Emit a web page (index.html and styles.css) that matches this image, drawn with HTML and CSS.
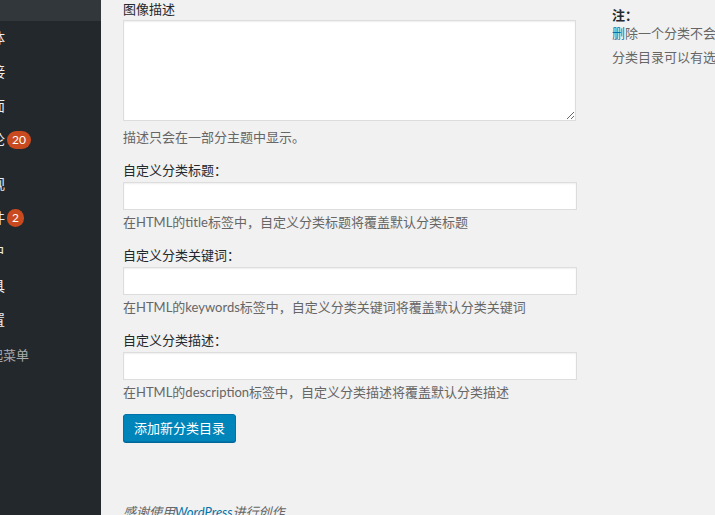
FILE: index.html
```html
<!DOCTYPE html>
<html lang="zh-CN">
  <head>
    <meta charset="UTF-8" />
    <meta name="viewport" content="width=device-width, initial-scale=1.0" />
    <title>分类目录</title>
    <link rel="stylesheet" href="styles.css">
  </head>
  <body>
    <div class="admin-menu">
      <div class="submenu-tail"></div>
      <ul class="menu">
        <li><span class="menu-name">媒体</span></li>
        <li><span class="menu-name">链接</span></li>
        <li><span class="menu-name">页面</span></li>
        <li><span class="menu-name">评论</span><span class="badge">20</span></li>
        <li class="separator"></li>
        <li><span class="menu-name">外观</span></li>
        <li><span class="menu-name">插件</span><span class="badge round">2</span></li>
        <li><span class="menu-name">用户</span></li>
        <li><span class="menu-name">工具</span></li>
        <li><span class="menu-name">设置</span></li>
        <li class="collapse"><span class="menu-name">收起菜单</span></li>
      </ul>
    </div>

    <div class="content">
      <div class="columns">
        <form class="col-left">
          <div class="form-field">
            <label for="tag-description">图像描述</label>
            <textarea id="tag-description" name="description"></textarea>
            <p class="help first">描述只会在一部分主题中显示。</p>
          </div>
          <div class="form-field">
            <label for="cat-title">自定义分类标题：</label>
            <input id="cat-title" type="text" name="cat_title" />
            <p class="help">在HTML的title标签中，自定义分类标题将覆盖默认分类标题</p>
          </div>
          <div class="form-field">
            <label for="cat-keywords">自定义分类关键词：</label>
            <input id="cat-keywords" type="text" name="cat_keywords" />
            <p class="help">在HTML的keywords标签中，自定义分类关键词将覆盖默认分类关键词</p>
          </div>
          <div class="form-field">
            <label for="cat-desc">自定义分类描述：</label>
            <input id="cat-desc" type="text" name="cat_desc" />
            <p class="help">在HTML的description标签中，自定义分类描述将覆盖默认分类描述</p>
          </div>
          <button type="submit" class="button-primary">添加新分类目录</button>
        </form>

        <div class="col-right">
          <p class="note-title"><strong>注：</strong></p>
          <p><a href="#">删</a>除一个分类不会删除分类中的文章。然而，仅隶属于被删除分类的文章将被指定为默认分类。</p>
          <p>分类目录可以有选择性地转换为标签，请使用分类目录到标签转换器。</p>
        </div>
      </div>

      <p class="footer">感谢使用<a href="#">WordPress</a>进行创作</p>
    </div>
  </body>
</html>
```

FILE: styles.css
```css
html,
body {
  margin: 0;
  padding: 0;
  height: 515px;
  overflow: hidden;
}

body {
  display: flex;
  background: #f1f1f1;
  color: #23282d;
  font-family: "Lato", "Noto Sans CJK SC", sans-serif;
  font-size: 13px;
  line-height: 18px;
  text-spacing-trim: space-all;
}

a {
  color: #0073aa;
  text-decoration: none;
}

/* admin menu (scrolled off to the left) */
.admin-menu {
  width: 101px;
  flex-shrink: 0;
  background: #23282d;
  overflow: hidden;
}

.submenu-tail {
  height: 21px;
  background: #32373c;
}

.menu {
  list-style: none;
  margin: 0;
  padding: 0;
}

.menu li {
  height: 34px;
  display: flex;
  align-items: center;
  white-space: nowrap;
  color: #eee;
  font-size: 14px;
}

.menu-name {
  margin-left: -23px;
}

.menu li.separator {
  height: 10px;
}

.menu li.collapse {
  height: 36px;
  color: #aaa;
  font-size: 13px;
}

.badge {
  margin-left: 2px;
  height: 18px;
  min-width: 8px;
  padding: 0 5px;
  border-radius: 9px;
  background: #ca4a1f;
  color: #fff;
  font-size: 12px;
  line-height: 18px;
  text-align: center;
}

.badge.round {
  width: 17px;
  min-width: 0;
  padding: 0;
}

/* main content */
.content {
  flex: 1;
  padding-left: 22px;
  min-width: 0;
}

.columns {
  display: flex;
}

.col-left {
  width: 454px;
  flex-shrink: 0;
  margin: 0;
}

.form-field label {
  display: block;
  height: 18px;
}

.form-field textarea {
  display: block;
  box-sizing: border-box;
  width: 453px;
  height: 101px;
  margin: 2px 0 0;
  padding: 2px 6px;
  border: 1px solid #ddd;
  background: #fff;
  box-shadow: inset 0 1px 2px rgba(0, 0, 0, 0.07);
  font-family: inherit;
  font-size: 14px;
  resize: vertical;
}

.form-field input {
  display: block;
  box-sizing: border-box;
  width: 454px;
  height: 28px;
  margin: 3px 0 0;
  padding: 3px 5px;
  border: 1px solid #ddd;
  background: #fff;
  box-shadow: inset 0 1px 2px rgba(0, 0, 0, 0.07);
  font-family: inherit;
  font-size: 14px;
}

.help {
  margin: 3px 0 15px;
  color: #666;
  white-space: nowrap;
}

.help.first {
  margin-top: 7px;
}

.form-field:last-of-type .help {
  margin-bottom: 13px;
}

.button-primary {
  height: 28px;
  padding: 0 10px 1px;
  border: 1px solid #0073aa;
  border-radius: 3px;
  background: #0085ba;
  box-shadow: 0 1px 0 #006799;
  color: #fff;
  font-family: inherit;
  font-size: 13px;
  cursor: pointer;
}

.col-right {
  margin-left: 35px;
  padding-top: 6px;
  white-space: nowrap;
}

.col-right p {
  margin: 0 0 6px;
  color: #666;
}

.col-right .note-title {
  margin: 0;
  color: #23282d;
}

.footer {
  margin: 61px 0 0;
  color: #666;
  font-style: italic;
}
```
